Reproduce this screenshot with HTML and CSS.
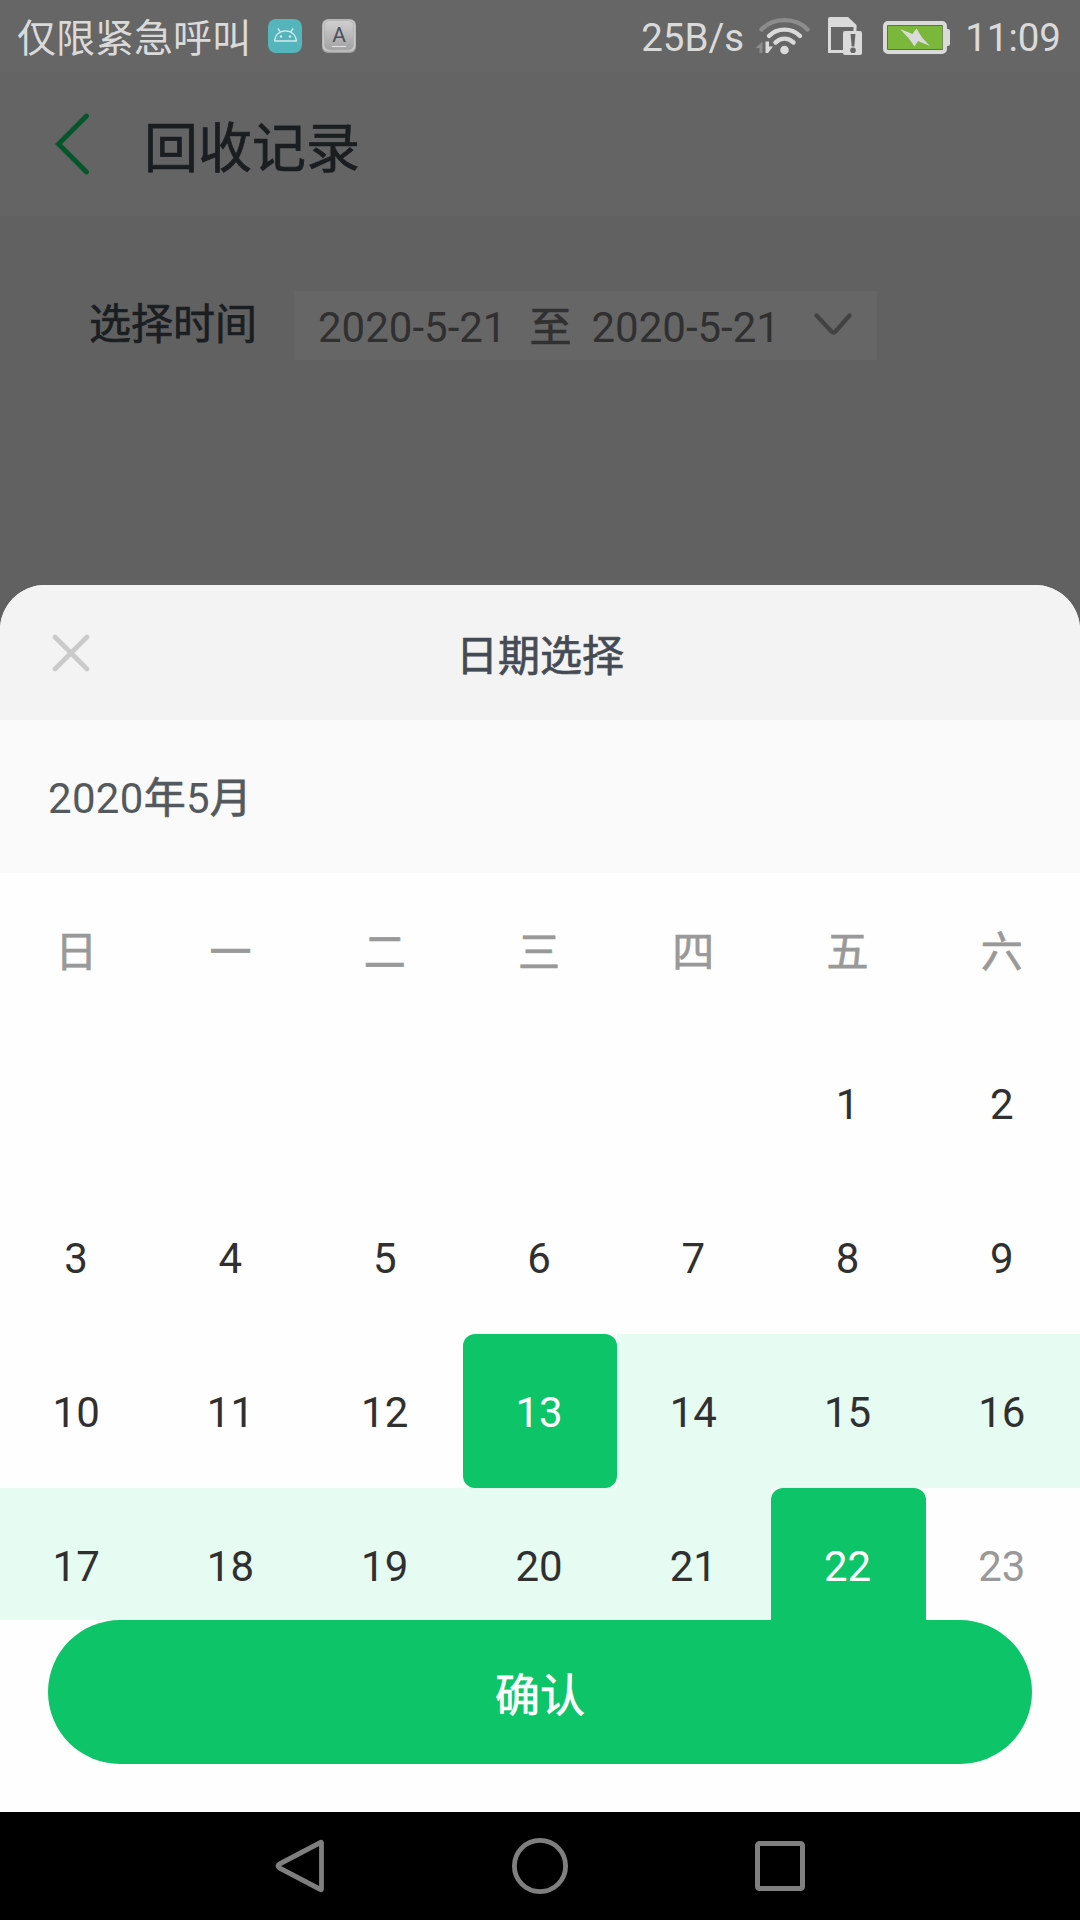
FILE: index.html
```html
<!DOCTYPE html>
<html lang="zh-CN">
<head>
<meta charset="utf-8">
<title>回收记录</title>
<link rel="stylesheet" href="styles.css">
</head>
<body>
<div class="screen">
  <header class="status">
    <span class="carrier">仅限紧急呼叫</span>
    <svg class="robot" width="34" height="34" viewBox="0 0 34 34">
      <rect width="34" height="34" rx="8" fill="#54b5bd"/>
      <path d="M6.600 22C7 16 11.500 11.800 17.500 11.800S28 16 28.400 22Z" fill="none" stroke="#d9e8e8" stroke-width="1.300" stroke-linejoin="round"/>
      <path d="M12.500 13 9.800 9.500M22.500 13 25.200 9.500" stroke="#d9e8e8" stroke-width="1.300"/>
      <circle cx="13" cy="17.500" r="1.200" fill="#d9e8e8"/><circle cx="22" cy="17.500" r="1.200" fill="#d9e8e8"/>
    </svg>
    <svg class="keycap" width="34" height="34" viewBox="0 0 34 34">
      <defs><linearGradient id="key" x2="0" y2="1"><stop stop-color="#d0d0d0"/><stop offset="1" stop-color="#a2a2a2"/></linearGradient></defs>
      <rect width="34" height="34" rx="6" fill="#a3a3a3"/>
      <rect x=".5" y=".5" width="33" height="32" rx="6" fill="#c9c9c9"/>
      <rect x="2.500" y="1.500" width="29" height="29.500" rx="5" fill="url(#key)" stroke="#adadad" stroke-width=".8"/>
      <text x="17" y="23" text-anchor="middle" font-family="Roboto" font-size="21" fill="#4d4f5c">A</text>
      <path d="M10 27.500h14" stroke="#dedede" stroke-width="1.200"/>
    </svg>
    <span class="speed">25B/s</span>
    <svg class="wifi" width="56" height="40" viewBox="0 0 56 40">
      <g fill="none" stroke="#dadada" stroke-width="4.400" stroke-linecap="round">
        <path d="M6.500 13.500C18 1 41 1 52.500 13.500" stroke="#8c8c8c"/>
        <path d="M14 20C22 11.500 37 11.500 45 20"/>
        <path d="M20.500 26.500C26 21.500 33 21.500 38.500 26.500"/>
      </g>
      <circle cx="29.500" cy="34" r="4.300" fill="#dadada"/>
      <path d="M7.500 25.500V37H4.500V32H0.500Z" fill="#8c8c8c"/>
      <path d="M10.500 25.500h3.500v5h4l-5 6.500h-2.500Z" fill="#dadada"/>
    </svg>
    <svg class="sim" width="34" height="38" viewBox="0 0 34 38">
      <path d="M1.500 9V34.500H16M27 15V9" fill="none" stroke="#dadada" stroke-width="3"/>
      <path d="M0 10V2Q0 0 2 0H20L28.500 8V10Z" fill="#dadada"/>
      <rect x="15" y="14" width="19" height="24" rx="2" fill="#dadada"/>
      <path d="M22.500 17h5l-1.200 12.500h-2.600Z" fill="#666"/><circle cx="25" cy="33.200" r="2.800" fill="#666"/>
    </svg>
    <svg class="battery" width="67" height="33" viewBox="0 0 67 33">
      <rect x="2" y="2" width="60" height="29" rx="3" fill="none" stroke="#dadada" stroke-width="4"/>
      <rect x="5" y="5" width="54.500" height="23" fill="#7ab73b"/>
      <path d="M63 8h2q2 0 2 2v13q0 2-2 2h-2Z" fill="#dadada"/>
      <path d="M17 8 29.500 13 33.500 7.500 39 16.500 47 25 35 20 31.500 25.500 25.500 17Z" fill="#dadada"/>
    </svg>
    <span class="clock">11:09</span>
  </header>

  <nav class="titlebar">
    <svg class="back" width="34" height="62" viewBox="0 0 34 62"><path d="M31.500 3 3.500 31 31.500 59" fill="none" stroke="#04562b" stroke-width="4.800" stroke-linecap="round"/></svg>
    <h1 class="title">回收记录</h1>
  </nav>

  <main class="filter">
    <span class="filter-label">选择时间</span>
    <div class="range">
      <span>2020-5-21</span><span class="to">至</span><span>2020-5-21</span>
      <svg class="chevron" width="38" height="24" viewBox="0 0 38 24"><path d="M2.500 2.500 17.500 18.500Q19.500 20.500 21.500 18.500L35.500 2.500" fill="none" stroke="#424242" stroke-width="4.200" stroke-linecap="round"/></svg>
    </div>
  </main>

  <section class="sheet">
    <div class="sheet-head">
      <svg class="close" width="38" height="38" viewBox="0 0 38 38"><path d="M3 3 35 35M35 3 3 35" stroke="#cacaca" stroke-width="4.600" stroke-linecap="round"/></svg>
      <h2 class="sheet-title">日期选择</h2>
    </div>
    <div class="month">2020<span class="unit">年</span>5<span class="unit">月</span></div>
    <div class="week">
      <span>日</span><span>一</span><span>二</span><span>三</span><span>四</span><span>五</span><span>六</span>
    </div>
    <div class="days">
      <span></span><span></span><span></span><span></span><span></span><span>1</span><span>2</span>
      <span>3</span><span>4</span><span>5</span><span>6</span><span>7</span><span>8</span><span>9</span>
      <span>10</span><span>11</span><span>12</span><span class="picked">13</span><span class="between">14</span><span class="between">15</span><span class="between">16</span>
      <span class="between">17</span><span class="between">18</span><span class="between">19</span><span class="between">20</span><span class="between">21</span><span class="picked">22</span><span class="disabled">23</span>
    </div>
    <div class="actions"><button class="confirm">确认</button></div>
  </section>

  <footer class="sysnav">
    <svg width="60" height="60" viewBox="0 0 60 60"><path d="M50.500 6.500Q51.500 5.500 51.500 7V53Q51.500 54.500 50.500 53.500L9.500 32Q6.500 30 9.500 28Z" fill="none" stroke="#7f7f7f" stroke-width="4.800" stroke-linejoin="round"/></svg>
    <svg width="60" height="60" viewBox="0 0 60 60"><circle cx="30" cy="30" r="25.600" fill="none" stroke="#7f7f7f" stroke-width="4.800"/></svg>
    <svg width="60" height="60" viewBox="0 0 60 60"><rect x="7.500" y="7.500" width="45" height="45" rx="2" fill="none" stroke="#7f7f7f" stroke-width="5"/></svg>
  </footer>
</div>
</body>
</html>
```

FILE: styles.css
```css
* { box-sizing: border-box; }
body { margin: 0; font-family: Roboto, "Noto Sans CJK SC", sans-serif; }
svg { display: block; flex: none; }
h1, h2 { margin: 0; }

.screen {
  width: 1080px;
  height: 1920px;
  display: flex;
  flex-direction: column;
  overflow: hidden;
  background: #616161;
}

/* Chinese labels sit between the regular and medium weights */
.title, .filter-label, .to, .sheet-title, .unit, .week, .confirm {
  font-weight: 400;
  -webkit-text-stroke: 0.7px currentColor;
}

.status {
  height: 72px;
  flex: none;
  display: flex;
  align-items: center;
  padding: 0 19px 0 17px;
  background: #666;
  color: #dadada;
  font-size: 38.5px;
  line-height: 72px;
  white-space: nowrap;
}
.carrier { width: 251px; font-size: 39px; padding-top: 5px; }
.keycap { margin-left: 20px; }
.speed { margin-left: auto; width: 114px; padding-top: 4px; }
.wifi { margin-right: 17px; }
.sim { margin-right: 21px; }
.battery { margin: 3px 15px 0 0; }
.clock { padding-top: 4px; }

.titlebar {
  height: 144px;
  flex: none;
  display: flex;
  align-items: center;
  padding-left: 55px;
  background: #646464;
}
.title {
  margin-left: 55px;
  padding-top: 11px;
  font-size: 54px;
  line-height: 80px;
  color: #1a1e21;
}

.filter {
  height: 369px;
  flex: none;
  display: flex;
  align-items: flex-start;
  padding: 75px 0 0 89px;
}
.filter-label {
  width: 205px;
  padding-top: 3px;
  font-size: 42px;
  line-height: 62px;
  color: #1a1e21;
}
.range {
  width: 583px;
  height: 69px;
  display: flex;
  align-items: center;
  padding: 4px 25px 0 24px;
  background: #666;
  color: #303030;
  font-size: 42px;
  line-height: 60px;
}
.to { margin: 0 20px 0 23px; }
.chevron { margin: -5px 0 0 auto; }

.sheet {
  height: 1227px;
  flex: none;
  display: flex;
  flex-direction: column;
  overflow: hidden;
  border-radius: 45px 45px 0 0;
  background: #fefefe;
}
.sheet-head {
  height: 135px;
  flex: none;
  display: grid;
  grid-template-columns: 1fr auto 1fr;
  align-items: center;
  padding: 0 52px;
  background: #f3f3f3;
}
.sheet-title {
  padding-top: 9px;
  font-size: 42px;
  line-height: 60px;
  color: #454b54;
}
.month {
  height: 153px;
  flex: none;
  padding: 2px 0 0 48px;
  background: #fafafa;
  color: #54595d;
  font-size: 42px;
  line-height: 153px;
  letter-spacing: 0.3px;
}
.week, .days {
  display: grid;
  grid-template-columns: repeat(7, 1fr);
  text-align: center;
  font-size: 42px;
}
.week span, .days span { padding-right: 2px; }
.week {
  height: 153px;
  flex: none;
  line-height: 160px;
  color: #999;
}
.days {
  height: 594px;
  flex: none;
  grid-auto-rows: 154px;
  overflow: hidden;
  line-height: 158px;
  color: #303030;
}
.between { background: #e6fbf2; }
.picked { background: #0dc568; color: #fff; border-radius: 12px; }
.disabled { color: #999; }

.actions { height: 192px; padding: 0 48px; }
.confirm {
  display: block;
  width: 100%;
  height: 144px;
  border: 0;
  border-radius: 72px;
  padding: 0;
  background: #0dc568;
  color: #fff;
  font-family: inherit;
  font-size: 45px;
}

.sysnav {
  height: 108px;
  flex: none;
  display: flex;
  justify-content: center;
  align-items: center;
  gap: 180px;
  background: #000;
}
```
